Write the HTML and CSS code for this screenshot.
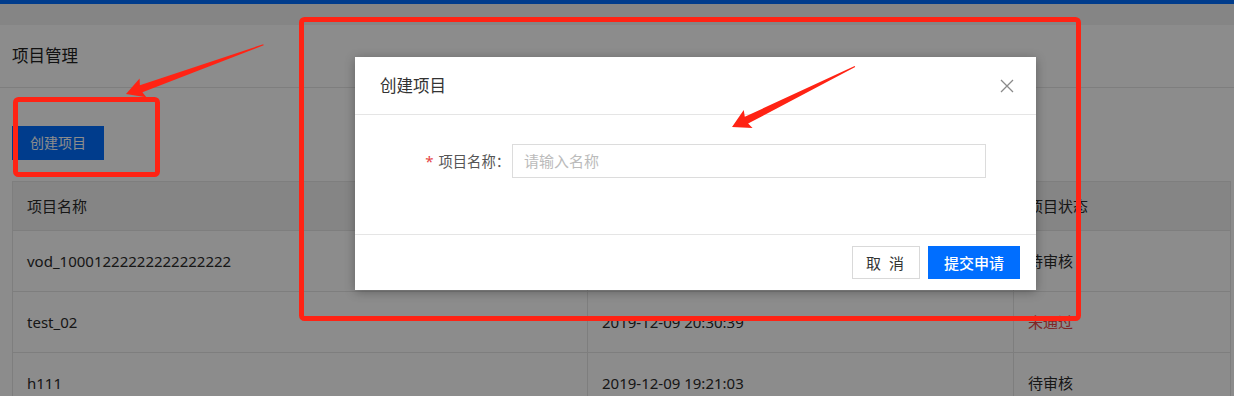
FILE: index.html
```html
<!DOCTYPE html>
<html lang="zh-CN">
<head>
<meta charset="utf-8">
<title>项目管理</title>
<link rel="stylesheet" href="styles.css">
</head>
<body>
<div class="topbar"></div>
<div class="subbar"></div>
<main class="page">
  <header class="page-head"><h2 class="page-title">项目管理</h2></header>
  <section class="content">
    <div class="toolbar"><button class="btn btn-create">创建项目</button></div>
    <table class="grid">
      <colgroup><col class="c1"><col class="c2"><col class="c3"></colgroup>
      <thead>
        <tr><th>项目名称</th><th>创建时间</th><th>项目状态</th></tr>
      </thead>
      <tbody>
        <tr><td>vod_10001222222222222222</td><td>2019-12-10 10:12:45</td><td>待审核</td></tr>
        <tr><td>test_02</td><td>2019-12-09 20:30:39</td><td class="st-fail">未通过</td></tr>
        <tr><td>h111</td><td>2019-12-09 19:21:03</td><td>待审核</td></tr>
      </tbody>
    </table>
  </section>
</main>

<div class="mask"></div>

<div class="dialog">
  <div class="dlg-head">
    <h3 class="dlg-title">创建项目</h3>
    <svg class="dlg-close" width="14" height="14" viewBox="0 0 14 14"><path d="M1 1 L13 13 M13 1 L1 13" stroke="#8a8a8a" stroke-width="1.3" fill="none"/></svg>
  </div>
  <div class="dlg-body">
    <div class="form-row">
      <label class="form-label"><span class="req">*</span>项目名称：</label>
      <div class="form-input">请输入名称</div>
    </div>
  </div>
  <div class="dlg-foot">
    <button class="btn btn-cancel">取 消</button>
    <button class="btn btn-submit">提交申请</button>
  </div>
</div>

<svg class="annot" width="1234" height="396" viewBox="0 0 1234 396">
  <rect x="15.5" y="99.5" width="142" height="75" rx="3" fill="none" stroke="#ff2314" stroke-width="5"/>
  <rect x="301.5" y="19.5" width="777" height="299" rx="3" fill="none" stroke="#ff2314" stroke-width="5"/>
  <g transform="translate(126,94) rotate(-19.7)">
    <polygon points="0,0 18,-10 16,-3.5 146,-0.6 146,0.6 16,4 18,10" fill="#ff2314"/>
  </g>
  <g transform="translate(732,127) rotate(-26.2)">
    <polygon points="0,0 18,-10 16,-3.5 137,-0.6 137,0.6 16,4 18,10" fill="#ff2314"/>
  </g>
</svg>
</body>
</html>
```

FILE: styles.css
```css
* { box-sizing: border-box; }

html, body {
  margin: 0;
  padding: 0;
}

body {
  width: 1234px;
  height: 396px;
  overflow: hidden;
  position: relative;
  background: #fff;
  color: #333;
  font-family: "Noto Sans", "Noto Sans CJK SC", sans-serif;
  font-size: 14px;
}

.topbar {
  height: 4px;
  background: #006eff;
}

.subbar {
  height: 21px;
  background: #f2f2f2;
}

.page-head {
  height: 63px;
  border-bottom: 1px solid #e5e5e5;
  display: flex;
  align-items: center;
  padding-left: 12px;
}

.page-title {
  margin: 0;
  font-size: 16.5px;
  font-weight: normal;
  line-height: 22px;
  color: #222;
}

.content {
  padding: 38px 4px 0 12px;
}

.toolbar {
  height: 34px;
  margin-bottom: 21px;
}

.btn {
  font-family: inherit;
  font-size: 14px;
  line-height: 20px;
  border: 0;
  padding: 0;
  cursor: pointer;
}

.btn-create {
  width: 92px;
  height: 34px;
  background: #006eff;
  color: #fff;
}

.grid {
  width: 1218px;
  border-collapse: collapse;
  table-layout: fixed;
  border: 1px solid #e5e5e5;
  font-size: 15px;
  color: #2b2b2b;
}

.c1 { width: 575px; }
.c2 { width: 426px; }
.c3 { width: 217px; }

.grid th,
.grid td {
  border: 1px solid #e5e5e5;
  text-align: left;
  font-weight: normal;
  padding: 0 0 0 14px;
  line-height: 20px;
  white-space: nowrap;
}

.grid th {
  height: 49px;
  background: #f2f2f2;
}

.grid td {
  height: 61px;
}

.grid td.st-fail {
  color: #e54545;
}

.mask {
  position: absolute;
  inset: 0;
  background: rgba(0, 0, 0, 0.45);
}

.dialog {
  position: absolute;
  left: 355px;
  top: 57px;
  width: 681px;
  background: #fff;
  box-shadow: 0 2px 10px rgba(0, 0, 0, 0.3);
}

.dlg-head {
  height: 58px;
  border-bottom: 1px solid #e5e5e5;
  display: flex;
  align-items: center;
  justify-content: space-between;
  padding: 0 22px 0 25px;
}

.dlg-title {
  margin: 0;
  font-size: 16.5px;
  font-weight: normal;
  line-height: 22px;
  color: #333;
}

.dlg-close {
  display: block;
}

.dlg-body {
  height: 119px;
  padding-top: 29px;
}

.form-row {
  display: flex;
  align-items: center;
}

.form-label {
  width: 157px;
  padding-right: 2px;
  text-align: right;
  color: #555;
  line-height: 20px;
  font-size: 14.3px;
}

.req {
  color: #e54545;
  margin-right: 5px;
  font-size: 15px;
}

.form-input {
  width: 474px;
  height: 34px;
  border: 1px solid #dcdcdc;
  padding-left: 11px;
  display: flex;
  align-items: center;
  color: #bbb;
  font-size: 15px;
  line-height: 20px;
}

.dlg-foot {
  height: 56px;
  border-top: 1px solid #e5e5e5;
  display: flex;
  justify-content: flex-end;
  align-items: center;
  gap: 8px;
  padding-right: 16px;
}

.btn-cancel {
  width: 68px;
  height: 33px;
  background: #fff;
  border: 1px solid #d9d9d9;
  color: #333;
  letter-spacing: 2px;
  font-size: 15px;
}

.btn-submit {
  width: 92px;
  height: 33px;
  background: #006eff;
  color: #fff;
  font-size: 15px;
  font-weight: 500;
}

.annot {
  position: absolute;
  left: 0;
  top: 0;
  pointer-events: none;
}
```
